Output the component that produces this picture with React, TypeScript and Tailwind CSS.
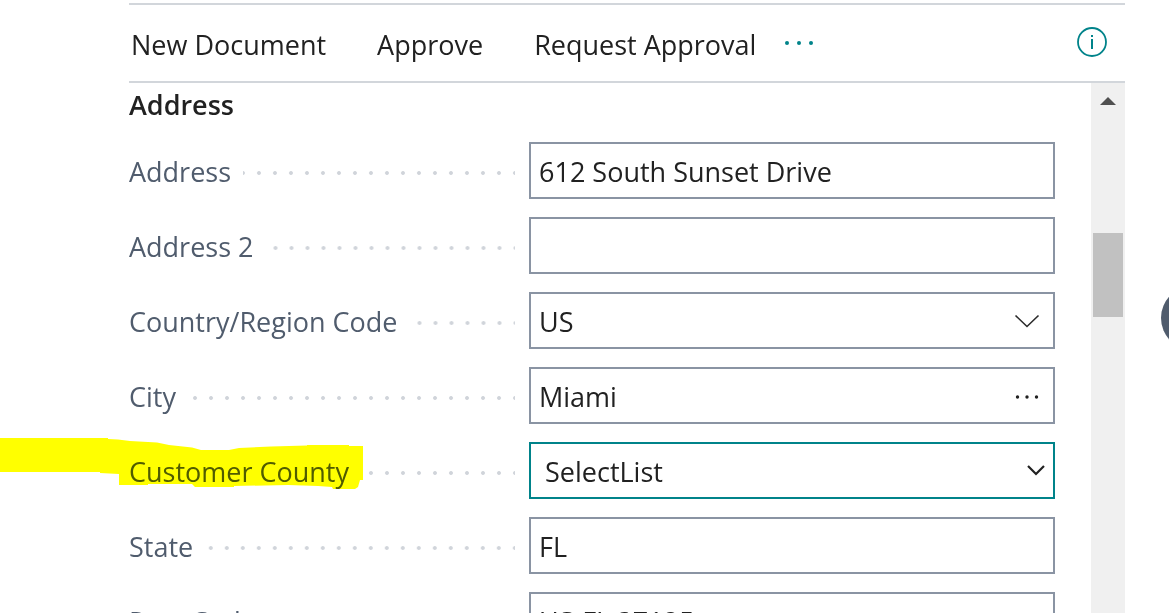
import type { ReactNode } from "react";

const inputBase =
  "block h-[57px] w-full appearance-none rounded-none border-2 bg-white pt-0.5 text-[27px] text-[#212121] outline-none";

function Field({ id, label, children }: { id: string; label: string; children: ReactNode }) {
  return (
    <div className="flex">
      <div className="flex h-[57px] w-[400px] shrink-0 items-center pt-0.5 pr-3.5">
        <label htmlFor={id} className="shrink-0 text-[#505c6d]">
          {label}
        </label>
        <span
          aria-hidden="true"
          className="mt-0.5 ml-3 h-1 grow bg-[radial-gradient(circle,#d0d4da_0px,#d0d4da_1.5px,transparent_2.3px)] bg-[length:16px_4px] bg-[position:right_-8px_top]"
        />
      </div>
      <div className="relative min-w-0 grow">{children}</div>
    </div>
  );
}

function TextField({ id, label, value }: { id: string; label: string; value: string }) {
  return (
    <Field id={id} label={label}>
      <input id={id} type="text" defaultValue={value} className={`${inputBase} border-[#8a94a3] px-2`} />
    </Field>
  );
}

export default function App() {
  return (
    <main className="relative flex h-screen flex-col overflow-hidden bg-white pt-[3px] pr-11 pl-[129px] font-['Open_Sans','Noto_Sans',sans-serif] text-[27px] leading-9 text-[#212121]">
      <header className="flex h-20 shrink-0 items-center border-y-2 border-[#d2d6db] pr-[18px] pb-0.5 pl-0.5">
        <nav className="flex grow items-center pt-1.5">
          <button type="button" className="mr-[51px]">New Document</button>
          <button type="button" className="mr-[51px]">Approve</button>
          <button type="button">Request Approval</button>
          <button type="button" aria-label="More options" className="ml-7">
            <svg width="32" height="8" viewBox="0 0 32 8" fill="#00838a" aria-hidden="true">
              <circle cx="3" cy="2" r="2" />
              <circle cx="15" cy="2" r="2" />
              <circle cx="27" cy="2" r="2" />
            </svg>
          </button>
        </nav>
        <button type="button" aria-label="Information">
          <svg width="30" height="30" viewBox="0 0 30 30" aria-hidden="true">
            <circle cx="15" cy="15" r="14" fill="none" stroke="#00838a" strokeWidth="1.8" />
            <path d="M14 8h2v2h-2zM14 12h2V22h-2z" fill="#00838a" />
          </svg>
        </button>
      </header>

      <div className="flex min-h-0 grow">
        <section className="min-w-0 grow overflow-hidden pr-9">
          <h2 className="h-[59px] pt-1 font-semibold">Address</h2>
          <form className="flex flex-col gap-[18px]">
            <TextField id="address" label="Address" value="612 South Sunset Drive" />
            <TextField id="address2" label="Address 2" value="" />
            <Field id="country" label="Country/Region Code">
              <select id="country" className={`${inputBase} border-[#8a94a3] px-2`}>
                <option>US</option>
              </select>
              <svg className="pointer-events-none absolute top-[22px] right-[15px]" width="26" height="14" viewBox="0 0 26 14" fill="none" stroke="#2b2b2b" strokeWidth="1.6" aria-hidden="true">
                <path d="M1.500 1.500 13 12.500 24.500 1.500" />
              </svg>
            </Field>
            <Field id="city" label="City">
              <input id="city" type="text" defaultValue="Miami" className={`${inputBase} border-[#8a94a3] pr-14 pl-2`} />
              <button type="button" aria-label="Look up city" className="absolute top-5 right-4 flex h-5 w-6 items-center">
                <svg width="24" height="4" viewBox="0 0 24 4" fill="#212121" aria-hidden="true">
                  <circle cx="2.500" cy="2" r="1.700" />
                  <circle cx="12" cy="2" r="1.700" />
                  <circle cx="21.500" cy="2" r="1.700" />
                </svg>
              </button>
            </Field>
            <Field id="county" label="Customer County">
              <select id="county" className={`${inputBase} border-[#00838a] px-3.5`}>
                <option>SelectList</option>
              </select>
              <svg className="pointer-events-none absolute top-[22px] right-[9px]" width="20" height="12" viewBox="0 0 20 12" fill="none" stroke="#212121" strokeWidth="2.2" aria-hidden="true">
                <path d="M2 2 10 10 18 2" />
              </svg>
            </Field>
            <TextField id="state" label="State" value="FL" />
            <TextField id="postcode" label="Post Code" value="US-FL 37125" />
          </form>
        </section>

        <div className="w-[34px] shrink-0 bg-[#f0f0f0] px-0.5 pt-3.5" aria-hidden="true">
          <svg className="mx-auto" width="16" height="8" viewBox="0 0 16 8" fill="#505050">
            <path d="M0 8 8 0 16 8z" />
          </svg>
          <div className="mt-32 h-[84px] bg-[#c1c1c1]" />
        </div>
      </div>

      <svg className="pointer-events-none absolute top-[437px] left-0 mix-blend-multiply" width="364" height="54" viewBox="0 0 364 54" fill="#ffff00" aria-hidden="true">
        <path d="M0 1H108V2L118 2.500 130 4 157 5.500 169 8 192 10.500 201 13H229L239 11 271 9.500 307 8.500V8H349V9H363V43H360L358 50 355 52H333L332 50 318 49 288 48 234 49V50H195L192 47H148V48H119V37L100 36V35H0Z" />
      </svg>

      <button type="button" aria-label="Next record" className="absolute top-[286px] -right-14 size-16 rounded-full bg-[#505c6d]" />
    </main>
  );
}
